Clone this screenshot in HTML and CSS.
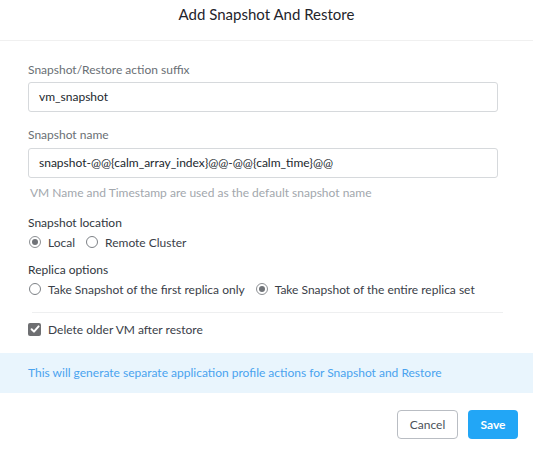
FILE: index.html
```html
<!DOCTYPE html>
<html>
<head>
<meta charset="utf-8">
<link rel="stylesheet" href="styles.css">
</head>
<body>
<div class="modal">
  <div class="modal-header">
    <h1 class="title">Add Snapshot And Restore</h1>
  </div>
  <div class="modal-body">
    <div class="field">
      <label class="field-label">Snapshot/Restore action suffix</label>
      <div class="input">vm_snapshot</div>
    </div>
    <div class="field field-2">
      <label class="field-label">Snapshot name</label>
      <div class="input">snapshot-@@{calm_array_index}@@-@@{calm_time}@@</div>
      <div class="help">VM Name and Timestamp are used as the default snapshot name</div>
    </div>
    <div class="group group-loc">
      <div class="group-label">Snapshot location</div>
      <div class="radio-row">
        <span class="radio checked"></span><span class="radio-text">Local</span>
        <span class="radio"></span><span class="radio-text">Remote Cluster</span>
      </div>
    </div>
    <div class="group group-rep">
      <div class="group-label">Replica options</div>
      <div class="radio-row">
        <span class="radio"></span><span class="radio-text">Take Snapshot of the first replica only</span>
        <span class="radio checked"></span><span class="radio-text">Take Snapshot of the entire replica set</span>
      </div>
    </div>
    <div class="separator"></div>
    <div class="check-row">
      <span class="checkbox">
        <svg width="12" height="12" viewBox="0 0 12 12"><path d="M2.6 6.2 L5 8.6 L9.6 3.4" fill="none" stroke="#fff" stroke-width="2" stroke-linecap="round" stroke-linejoin="round"/></svg>
      </span>
      <span class="check-text">Delete older VM after restore</span>
    </div>
  </div>
  <div class="banner">This will generate separate application profile actions for Snapshot and Restore</div>
  <div class="modal-footer">
    <button class="btn btn-cancel">Cancel</button>
    <button class="btn btn-save">Save</button>
  </div>
</div>
</body>
</html>
```
FILE: styles.css
```css
html, body {
  margin: 0;
  padding: 0;
  background: #fff;
}
body {
  font-family: "Lato", "Liberation Sans", sans-serif;
  width: 533px;
  height: 449px;
  overflow: hidden;
}
.modal {
  display: flex;
  flex-direction: column;
}
.modal-header {
  height: 41px;
  border-bottom: 1px solid #f0f0f0;
  display: flex;
  justify-content: center;
  padding-top: 5px;
  box-sizing: border-box;
}
.title {
  margin: 0;
  font-size: 15px;
  font-weight: 400;
  line-height: 18px;
  color: #1f242b;
}
.modal-body {
  padding: 21px 35px 0 28px;
  display: flex;
  flex-direction: column;
}
.field {
  display: flex;
  flex-direction: column;
}
.field-2 {
  margin-top: 15px;
}
.field-label {
  font-size: 12px;
  line-height: 16px;
  color: #6a6f75;
  margin-bottom: 4px;
}
.field-2 .field-label {
  margin-bottom: 5px;
}
.input {
  height: 30px;
  box-sizing: border-box;
  border: 1px solid #d6d9dc;
  border-radius: 3px;
  padding: 0 10px;
  font-size: 12px;
  line-height: 28px;
  color: #22272e;
}
.help {
  margin: 7px 0 0 2px;
  font-size: 12px;
  line-height: 16px;
  color: #a2a7ad;
}
.group {
  display: flex;
  flex-direction: column;
}
.group-loc {
  margin-top: 14px;
}
.group-rep {
  margin-top: 11px;
}
.group-label {
  font-size: 12px;
  line-height: 16px;
  color: #313740;
}
.radio-row {
  display: flex;
  align-items: center;
  height: 18px;
  margin-top: 2px;
}
.radio {
  width: 12px;
  height: 12px;
  box-sizing: border-box;
  border: 1px solid #7d8186;
  border-radius: 50%;
  margin-left: 1px;
  margin-right: 7px;
  flex: none;
  position: relative;
}
.radio.checked {
  border-color: #8c8f93;
}
.radio.checked::after {
  content: "";
  position: absolute;
  left: 2px;
  top: 2px;
  width: 6px;
  height: 6px;
  border-radius: 50%;
  background: #707378;
}
.radio-text {
  font-size: 12px;
  color: #3a4048;
  margin-right: 10px;
}
.separator {
  height: 1px;
  background: #eeeff0;
  margin: 14px -5px 0 4px;
}
.check-row {
  display: flex;
  align-items: center;
  margin-top: 9px;
  height: 14px;
}
.checkbox {
  width: 13px;
  height: 13px;
  border-radius: 2px;
  background: #6e6f72;
  display: flex;
  align-items: center;
  justify-content: center;
  margin-right: 7px;
}
.check-text {
  font-size: 12px;
  color: #3a4048;
}
.banner {
  margin-top: 17px;
  height: 40px;
  background: #e9f5fd;
  color: #4aa3ef;
  font-size: 12px;
  line-height: 40px;
  padding-left: 28px;
}
.modal-footer {
  display: flex;
  justify-content: flex-end;
  padding: 17px 15px 0 0;
  gap: 10px;
}
.btn {
  height: 29px;
  border-radius: 4px;
  font-family: inherit;
  font-size: 12px;
  padding: 0;
  cursor: pointer;
}
.btn-cancel {
  width: 61px;
  background: #fff;
  border: 1px solid #b9bdc3;
  color: #4b5159;
}
.btn-save {
  width: 50px;
  background: #22a6f6;
  border: none;
  color: #fff;
  font-weight: 700;
}
```
